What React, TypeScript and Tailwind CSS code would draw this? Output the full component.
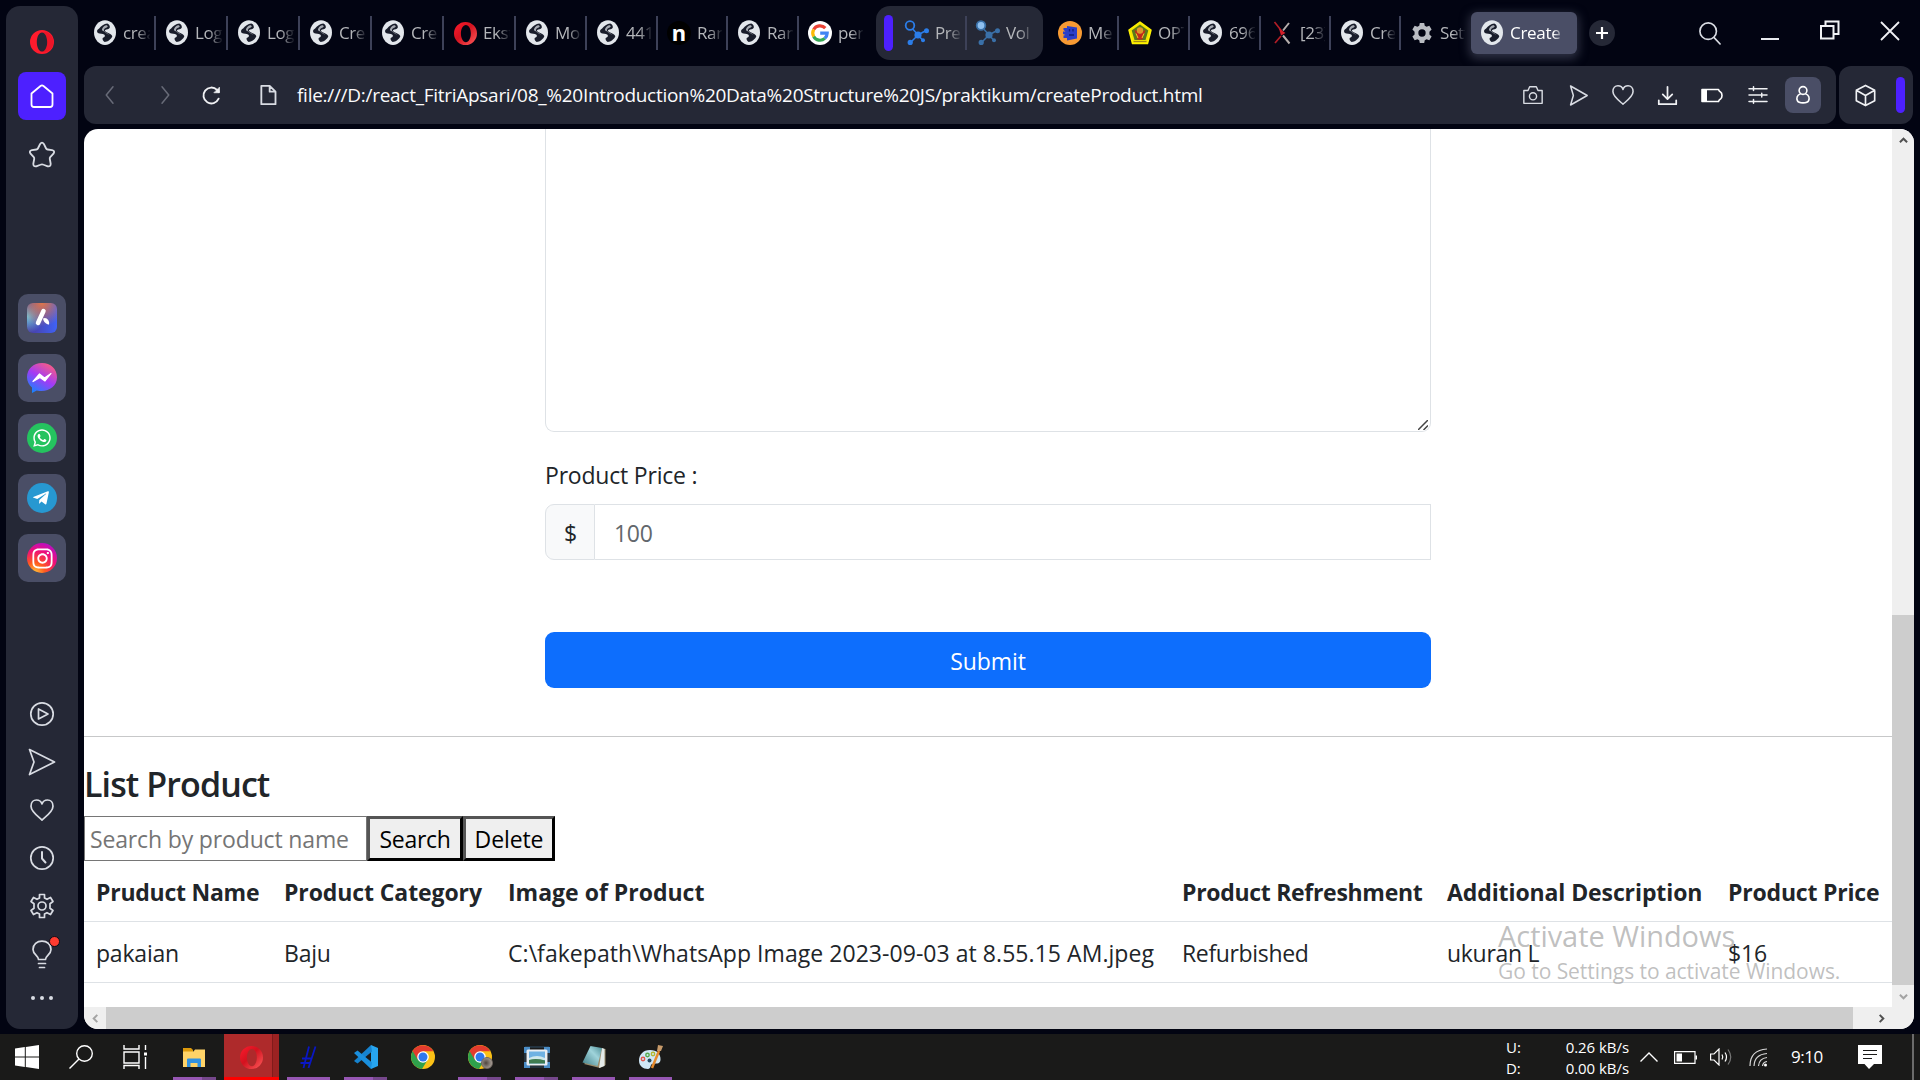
import React from "react";
import type { ReactNode } from "react";
import { FaWhatsapp, FaTelegramPlane, FaInstagram } from "react-icons/fa";

type IconProps = { className?: string };

/* ---------- favicons ---------- */

const Globe = ({ className = "size-[22px]" }: IconProps) => (
  <svg viewBox="0 0 24 24" className={`${className} overflow-visible`}>
    <ellipse cx="12" cy="12" rx="12" ry="14" fill="#e3e7ec" transform="translate(0 0) scale(1 .96)" />
    <path d="M14.500 1.500C11 2 7.500 4 5.600 7.200C3.200 8.400 2.600 10.500 4.200 12C6.500 13.200 9.500 12.400 11.400 14C12.600 15.400 11.600 16.800 9.800 17.200C8.600 18 9.600 20.800 11.600 21.800C15 21.600 18.600 19 20 15.600C19.400 13.400 16.600 12.600 14.400 11.400C12.600 10.600 11.400 9.600 12.200 8.600C13.600 7.600 16.200 8 17.200 6.200C17.600 4.400 16.600 2 14.500 1.500Z" fill="#191d2b" />
    <path d="M13 3.500C10.500 4.500 8.600 6.600 8.600 9C10.600 9.800 13 12.400 17 14.200C15.800 12.400 10.600 10.800 10.800 8.600C11 7 14 6.500 15 5C15 4 14 3.300 13 3.500Z" fill="#e3e7ec" opacity=".7" />
  </svg>
);

const OperaLogo = ({ className = "size-6" }: IconProps) => (
  <svg viewBox="0 0 24 24" className={className}>
    <path fillRule="evenodd" d="M12 0a12 12 0 1 0 0 24a12 12 0 1 0 0-24Zm0 2.400c3 0 5.200 4.400 5.200 9.600s-2.200 9.600-5.200 9.600s-5.200-4.400-5.200-9.600S9 2.400 12 2.400Z" fill="#ff1b2d" />
    <path d="M12 2.400c2-.9 4.600-.8 6.800.8c3 2.200 4.600 5.300 4.600 8.800s-1.600 6.600-4.600 8.800c-2.200 1.600-4.800 1.700-6.800.8c3 0 5.200-4.400 5.200-9.600S15 2.400 12 2.400Z" fill="#a70014" opacity=".2" />
  </svg>
);

const OperaRing = ({ className = "size-[23px]" }: IconProps) => (
  <svg viewBox="0 0 24 24" className={className}>
    <defs>
      <linearGradient id="ring" x1="0" y1="0" x2="1" y2="1">
        <stop offset="0" stopColor="#ff1b2d" />
        <stop offset=".45" stopColor="#d3121f" />
        <stop offset="1" stopColor="#ff5c5c" />
      </linearGradient>
    </defs>
    <path fillRule="evenodd" d="M12 0a12 12 0 1 0 0 24a12 12 0 1 0 0-24Zm.4 3c3 0 5.200 4 5.200 9s-2.200 9-5.200 9s-5.200-4-5.200-9S9.400 3 12.400 3Z" fill="url(#ring)" />
  </svg>
);

const NMark = () => (
  <span className="flex size-6 items-center justify-center rounded-full bg-black pb-[3px] font-['Noto_Sans'] text-[22px] leading-none font-bold text-white">n</span>
);

const GoogleMark = () => (
  <svg viewBox="0 0 24 24" className="size-6">
    <circle cx="12" cy="12" r="12" fill="#fff" />
    <g fill="none" strokeWidth="3.200">
      <path d="M17.300 7.200A7.200 7.200 0 0 0 5.700 8.500" stroke="#ea4335" />
      <path d="M5.700 8.500A7.200 7.200 0 0 0 5.700 15.500" stroke="#fbbc05" />
      <path d="M5.700 15.500A7.200 7.200 0 0 0 16.800 17.400" stroke="#34a853" />
      <path d="M16.800 17.400A7.200 7.200 0 0 0 19.200 12.200H12.200" stroke="#4285f4" />
    </g>
  </svg>
);

const NodesMark = ({ dim }: { dim?: boolean }) => {
  const c = dim ? "#3a70a8" : "#2b7de9";
  return (
    <svg viewBox="0 0 26 26" className="size-[26px]">
      <path d="M7 7 L14 15 L22 10.500 M14 15 L6 23 M14 15 L19 20.500" stroke={c} strokeWidth="1.500" fill="none" />
      <circle cx="6" cy="5.500" r="4.300" fill={dim ? "#8fc0f0" : "#252836"} stroke={c} strokeWidth="1.800" />
      <circle cx="14" cy="15" r="3.600" fill={c} />
      <circle cx="22.500" cy="10.800" r="2.500" fill={c} />
      <circle cx="6.200" cy="22.400" r="2.600" fill={c} />
      <circle cx="19" cy="20.300" r="2" fill={c} />
    </svg>
  );
};

const BookMark = () => (
  <svg viewBox="0 0 24 24" className="size-6">
    <circle cx="12" cy="12" r="12" fill="#f79a33" />
    <path d="M9 5L19 6.500V17.500L9 19.500V17L5.500 17V14.500L7.500 14L5 13V10.500H7.500L5.500 9V7H9Z" fill="#2b3fc9" />
    <path d="M11.500 8v2.500M15 8v2.500M11 14h5" stroke="#131f7a" strokeWidth="1.300" />
  </svg>
);

const CrestMark = () => (
  <svg viewBox="0 0 24 24" className="size-6">
    <path d="M12 1L23 9L19.500 22.500H4.500L1 9Z" fill="#f3e600" stroke="#fff200" strokeWidth="1.500" strokeLinejoin="round" />
    <path d="M12 3.500L20.300 9.500L17.500 19H6.500L3.700 9.500Z" fill="#5a7a1c" />
    <path d="M6.500 8.500L9.500 18.500H14.500L17.500 8.500L12 13Z" fill="#c3271c" />
    <circle cx="12" cy="9.500" r="3.200" fill="#e0952a" />
    <path d="M8 12.500L10 17M16 12.500L14 17" stroke="#e6d321" strokeWidth="1" />
    <path d="M5.500 20.500h13" stroke="#a38a16" strokeWidth="1.200" />
  </svg>
);

const XMark = () => (
  <svg viewBox="0 0 18 24" className="h-[24px] w-[18px]">
    <path d="M16 2L10 9.500M10 14.500L16.500 22.500" stroke="#b5aeac" strokeWidth="2" />
    <path d="M1.500 1L9 10.500M8 15L2 22" stroke="#b01d26" strokeWidth="1.700" />
    <path d="M6 7.500L12.500 12L8 14.500Z" fill="#d61f29" />
  </svg>
);

const GearSolid = () => (
  <svg viewBox="0 0 24 24" className="size-[22px]">
    <path fillRule="evenodd" fill="#b9bcc2" d="M9.600 1h4.800l.6 3.200 2 1.100L20 4.200l2.500 4.100-2.400 2.200v3l2.400 2.200L20 19.800l-3-1.100-2 1.100-.6 3.200H9.600L9 19.800l-2-1.100-3 1.100-2.500-4.100 2.400-2.200v-3L1.500 8.300 4 4.200l3 1.100 2-1.100ZM12 8a4 4 0 1 0 0 8a4 4 0 1 0 0-8Z" />
  </svg>
);

/* ---------- outline icons ---------- */

const Line = ({ size = 24, w = 1.7, color = "#d9dce3", children }: { size?: number; w?: number; color?: string; children: ReactNode }) => (
  <svg viewBox="0 0 24 24" width={size} height={size} fill="none" stroke={color} strokeWidth={w} strokeLinecap="round" strokeLinejoin="round" className="shrink-0 overflow-visible">
    {children}
  </svg>
);

const heart = <path d="M12 22C8 18.500 1 13.500 1 8.200C1 4.200 3.500 2 6.500 2C9 2 11.200 3.500 12 6C12.800 3.500 15 2 17.500 2C20.500 2 23 4.200 23 8.200C23 13.500 16 18.500 12 22Z" />;
const plane = <path d="M0 0L25 12.500L0 25L4.500 12.500Z" />;

/* ---------- tabs ---------- */

type TabItem = { icon: ReactNode; label: string; width: string; sep?: boolean };

const globe = <Globe />;

const tabsA: TabItem[] = [
  { icon: globe, label: "createProduct", width: "w-[72px]", sep: true },
  { icon: globe, label: "Login", width: "w-[72px]", sep: true },
  { icon: globe, label: "Login", width: "w-[72px]", sep: true },
  { icon: globe, label: "Create", width: "w-[72px]", sep: true },
  { icon: globe, label: "Create", width: "w-[72px]", sep: true },
  { icon: <OperaRing />, label: "Ekstensi", width: "w-[72px]", sep: true },
  { icon: globe, label: "Modul", width: "w-[71px]", sep: true },
  { icon: globe, label: "441", width: "w-[71px]", sep: true },
  { icon: <NMark />, label: "Rangkum", width: "w-[70px]", sep: true },
  { icon: globe, label: "Rangkum", width: "w-[71px]", sep: true },
  { icon: <GoogleMark />, label: "pengertian", width: "w-[70px]" },
];
const tabsB: TabItem[] = [
  { icon: <NodesMark />, label: "Presensi", width: "w-[71px]", sep: true },
  { icon: <NodesMark dim />, label: "Vol 1", width: "w-[71px]" },
];
const tabsC: TabItem[] = [
  { icon: <BookMark />, label: "Media", width: "w-[70px]", sep: true },
  { icon: <CrestMark />, label: "OPT", width: "w-[71px]", sep: true },
  { icon: globe, label: "696", width: "w-[71px]", sep: true },
  { icon: <XMark />, label: "[23]", width: "w-[70px]", sep: true },
  { icon: globe, label: "Create", width: "w-[70px]", sep: true },
  { icon: <GearSolid />, label: "Settings", width: "w-[70px]" },
];

const Tab = ({ icon, label, width, sep }: TabItem) => (
  <div className={`flex h-[34px] shrink-0 items-center ${width} ${sep ? "border-r-2 border-[#3d4158]" : "border-r-2 border-transparent"}`}>
    <span className="flex w-[42px] shrink-0 items-center justify-center">{icon}</span>
    <span className="-ml-[3px] mr-[4px] min-w-0 flex-1 overflow-hidden [mask-image:linear-gradient(to_right,black_50%,transparent_105%)] text-[17px] tracking-[-0.4px] whitespace-nowrap text-[#b4b6ba]">{label}</span>
  </div>
);

const TabStrip = () => (
  <header className="flex h-[66px] items-center pl-[6px]">
    {tabsA.map((t, i) => <Tab key={i} {...t} />)}
    <div className="ml-[7px] flex h-[54px] items-center rounded-[14px] bg-[#252836] pl-2">
      <span className="mr-[3px] h-9 w-[9px] rounded-full bg-[#4d20ff]" />
      {tabsB.map((t, i) => <Tab key={i} {...t} />)}
      <span className="w-[5px]" />
    </div>
    <span className="w-[6px] shrink-0" />
    {tabsC.map((t, i) => <Tab key={i} {...t} />)}
    <div className="flex h-[42px] w-[106px] shrink-0 items-center rounded-[6px] bg-[#4a4e66] pl-[10px] shadow-[0_3px_10px_2px_#2d3042]">
      <Globe />
      <span className="ml-[7px] w-[54px] overflow-hidden [mask-image:linear-gradient(to_right,black_80%,transparent)] text-[17px] tracking-[-0.3px] whitespace-nowrap text-white">Create P</span>
    </div>
    <span className="ml-3 flex size-[26px] shrink-0 items-center justify-center rounded-full bg-[#252836]">
      <svg viewBox="0 0 12 12" className="size-3"><path d="M6 0V12M0 6H12" stroke="#fff" strokeWidth="2.200" /></svg>
    </span>
    <div className="ml-auto flex h-full items-center pr-5">
      <span className="mr-[40px]"><Line size={22} w={1.800}><circle cx="10" cy="10" r="9" /><path d="M16.500 17L23 24" /></Line></span>
      <span className="mt-3 mr-[41px] h-[2px] w-[18px] bg-[#e8eaee]" />
      <svg viewBox="0 0 20 20" className="mr-[40px] mb-[6px] size-[20px]" fill="none" stroke="#f0f1f4" strokeWidth="2">
        <path d="M1 6h12.500v12.500H1ZM5.500 6V1.500H18.500V14H13.500" />
      </svg>
      <svg viewBox="0 0 20 20" className="mb-[5px] size-[20px]" fill="none" stroke="#f0f1f4" strokeWidth="1.800"><path d="M1 1L19 19M19 1L1 19" /></svg>
    </div>
  </header>
);

/* ---------- address bar ---------- */

const Slot = ({ className, children }: { className: string; children: ReactNode }) => (
  <span className={`flex h-full shrink-0 items-center justify-center ${className}`}>{children}</span>
);

const AddressBar = () => (
  <div className="flex h-[58px] gap-[3px]">
    <div className="flex w-[1752px] items-center rounded-[12px] bg-[#252836]">
      <Slot className="w-[52px]"><Line size={18} w={2} color="#686b78"><path d="M16 1L7 12L16 23" /></Line></Slot>
      <Slot className="w-[57px]"><Line size={18} w={2} color="#686b78"><path d="M8 1L17 12L8 23" /></Line></Slot>
      <Slot className="w-[36px]">
        <Line size={19} w={2.400} color="#f0f1f4"><path d="M21 16A10 10 0 1 1 19 5L21 7.500" /><path d="M22 2V8.500H15.500Z" fill="#f0f1f4" strokeWidth="1" /></Line>
      </Slot>
      <Slot className="w-[78px]"><Line size={20} w={2.200}><path d="M4 1H14L21 8V23H4ZM14 1V8H21" /></Line></Slot>
      <span className="-ml-[10px] text-[19px] tracking-[-0.28px] whitespace-nowrap text-[#fbfbfc]">file:///D:/react_FitriApsari/08_%20Introduction%20Data%20Structure%20JS/praktikum/createProduct.html</span>
      <div className="ml-auto flex h-full items-center pr-[15px]">
        <Slot className="w-[46px]"><Line size={20} w={1.700}><path d="M1 6.500H6L8 2H16L18 6.500H23V22H1Z" /><circle cx="12" cy="13.500" r="4.300" /></Line></Slot>
        <Slot className="w-[45px]"><Line size={19} w={1.900}><path d="M2 0L23 12L2 24L5.500 12Z" /></Line></Slot>
        <Slot className="w-[44px]"><Line size={22} w={1.700}>{heart}</Line></Slot>
        <Slot className="w-[45px]"><Line size={19} w={2.200} color="#f0f1f4"><path d="M12 1V16M6 10.500L12 16.500L18 10.500M1 18V23H23V18" /></Line></Slot>
        <Slot className="w-[45px]">
          <svg viewBox="0 0 22 14" className="mr-[2px] h-[15px] w-[22px]"><path d="M1 1H17.500Q18 2.800 19.500 3.500C21.500 4.500 21.500 9.500 19.500 10.500Q18 11.200 17.500 13H1Z" fill="none" stroke="#fff" strokeWidth="1.600" strokeLinejoin="round" /><path d="M1 1H6V13H1Z" fill="#fff" /></svg>
        </Slot>
        <Slot className="w-[45px]"><Line size={18} w={2} color="#f0f1f4"><path d="M0 3.500H24M0 12H24M0 20.500H24M6 1V6M17 9.500V14.500M6 18V23" /></Line></Slot>
        <span className="ml-[5px] flex size-9 items-center justify-center rounded-[8px] bg-[#4a4e66]">
          <Line size={18} w={2.100} color="#fff"><circle cx="12" cy="6" r="5.200" /><path d="M8.500 10.500C4 12 3 16 4.500 19.500C6 23.500 18 23.500 19.500 19.500C21 16 20 12 15.500 10.500" /></Line>
        </span>
      </div>
    </div>
    <div className="flex w-[74px] items-center rounded-[12px] bg-[#252836] pl-4">
      <Line size={21} w={1.900} color="#f0f1f4"><path d="M12 0.500L22.500 6V18L12 23.500L1.500 18V6ZM1.500 6L12 12L22.500 6M12 12V23.500" /></Line>
      <span className="ml-5 h-9 w-[9px] rounded-full bg-[#4d20ff]" />
    </div>
  </div>
);

/* ---------- side bar ---------- */

const AppTile = ({ children }: { children: ReactNode }) => (
  <span className="flex size-12 shrink-0 items-center justify-center rounded-[10px] bg-[#4a4e66]">{children}</span>
);

const SideBar = () => (
  <aside className="mt-[6px] flex h-[1023px] w-[72px] flex-col items-center rounded-[14px] bg-[#252836]">
    <span className="mt-6"><OperaLogo /></span>
    <span className="mt-[18px] flex size-12 items-center justify-center rounded-[8px] bg-[#4d20ff]">
      <Line size={24} w={1.800} color="#fff"><path d="M1.500 9.500L10.500 2Q12 .8 13.500 2L22.500 9.500V20.500Q22.500 23 20 23H4Q1.500 23 1.500 20.500Z" /></Line>
    </span>
    <span className="mt-[22px] h-[26px]"><Line size={26} w={1.700}><path d="M10.300 1.800Q12 -.6 13.700 1.800L15.800 6Q16.200 6.800 17.200 6.900L21.300 7.500Q24.300 8.300 22.600 10.800L19.600 14Q19 14.800 19.200 15.700L20 20Q20.200 22.800 17.300 22.400L13.500 21Q12 20.400 10.500 21L6.700 22.400Q3.800 22.800 4 20L4.800 15.700Q5 14.800 4.400 14L1.400 10.800Q-.3 8.300 2.700 7.500L6.800 6.900Q7.800 6.800 8.200 6Z" /></Line></span>
    <div className="mt-[126px] flex flex-col gap-3">
      <AppTile>
        <span className="flex size-[30px] items-center justify-center rounded-[6px] bg-[radial-gradient(circle_at_50%_0%,#e0764a_0%,transparent_70%),radial-gradient(circle_at_0%_45%,#6fc8e0_0%,transparent_50%),linear-gradient(to_right,#4a3a9c,#3f62f5)]">
          <svg viewBox="0 0 30 30" className="size-[30px]"><path d="M16.500 8L11 20" stroke="#fff" strokeWidth="4.500" strokeLinecap="round" /><path d="M16 15.500C19 13.500 23 17 22 21.500C19.500 21.500 16.500 19 16 15.500Z" fill="#fff" /></svg>
        </span>
      </AppTile>
      <AppTile>
        <svg viewBox="0 0 30 30" className="size-[30px]">
          <defs><linearGradient id="msg" x1=".8" y1="0" x2=".2" y2="1"><stop offset="0" stopColor="#ff5f7c" /><stop offset=".5" stopColor="#a33af5" /><stop offset="1" stopColor="#1286ff" /></linearGradient></defs>
          <path d="M15 0C6.500 0 0 6 0 14.200C0 18.500 2 22 5 24.500V30L9.800 27.400C20 30 30 24 30 14.200C30 6 23.500 0 15 0Z" fill="url(#msg)" />
          <path d="M6 18.500L12.500 11L17.500 15L24 10.500L18 18L13 14.500Z" fill="#fff" stroke="#fff" strokeWidth="1.200" strokeLinejoin="round" />
        </svg>
      </AppTile>
      <AppTile><span className="flex size-[30px] items-center justify-center rounded-full bg-[#25c35f]"><FaWhatsapp className="size-[20px] text-white" /></span></AppTile>
      <AppTile><span className="flex size-[30px] items-center justify-center rounded-full bg-[#2798d1]"><FaTelegramPlane className="mr-[2px] size-[18px] text-white" /></span></AppTile>
      <AppTile><span className="flex size-[30px] items-center justify-center rounded-full bg-[radial-gradient(circle_at_25%_100%,#ffc63a_0%,#ff5a1f_28%,#ee0f78_60%,#9a0ff0_100%)]"><FaInstagram className="size-[23px] text-white" /></span></AppTile>
    </div>
    <div className="mt-auto flex flex-col items-center gap-6 pb-[29px]">
      <Line><circle cx="12" cy="12" r="11.200" /><path d="M8.500 7V17L18 12Z" /></Line>
      <Line><g transform="translate(-.5 -.5)">{plane}</g></Line>
      <Line>{heart}</Line>
      <Line><circle cx="12" cy="12" r="11.200" /><path d="M12 6V12.500L15.500 16.500" strokeWidth="2" /></Line>
      <Line>
        <path d="M9.500 .5H14.500V4L17 5.300L20.500 3.500L23 7.500L20 9.700V14.300L23 16.500L20.500 20.500L17 18.700L14.500 20V23.500H9.500V20L7 18.700L3.500 20.500L1 16.500L4 14.300V9.700L1 7.500L3.500 3.500L7 5.300L9.500 4Z" />
        <circle cx="12" cy="12" r="4" />
      </Line>
      <span className="relative h-6">
        <Line><path d="M8.500 17.500C8.500 13.500 3 12.500 3 7.500C3 2.500 7 -.8 12 -.8S21 2.500 21 7.500C21 12.500 15.500 13.500 15.500 17.500ZM8.500 21.500H15.500M9.500 25.500H14.500" /></Line>
        <span className="absolute -top-[6px] left-[19px] size-[11px] rounded-full border border-[#0b0d18] bg-[#ff3b30]" />
      </span>
      <span className="mt-[6px] flex h-1 gap-1">
        <i className="size-1 rounded-full bg-[#d9dce3]" /><i className="ml-px size-1 rounded-full bg-[#d9dce3]" /><i className="ml-px size-1 rounded-full bg-[#d9dce3]" />
      </span>
    </div>
  </aside>
);

/* ---------- web page ---------- */

const cols = [
  { head: "Pruduct Name", cell: "pakaian", width: "w-[188px]", headTracking: "tracking-[-0.25px]", cellTracking: "tracking-[-0.2px]" },
  { head: "Product Category", cell: "Baju", width: "w-[224px]", headTracking: "tracking-[-0.1px]", cellTracking: "tracking-[-0.2px]" },
  { head: "Image of Product", cell: "C:\\fakepath\\WhatsApp Image 2023-09-03 at 8.55.15 AM.jpeg", width: "w-[674px]", headTracking: "tracking-[0px]", cellTracking: "tracking-[0.05px]" },
  { head: "Product Refreshment", cell: "Refurbished", width: "w-[265px]", headTracking: "tracking-[-0.3px]", cellTracking: "tracking-[-0.35px]" },
  { head: "Additional Description", cell: "ukuran L", width: "w-[281px]", headTracking: "tracking-[-0.1px]", cellTracking: "tracking-[-0.3px]" },
  { head: "Product Price", cell: "$16", width: "w-[176px]", headTracking: "tracking-[-0.2px]", cellTracking: "tracking-[-0.2px]" },
];

const Arrow = ({ d, color }: { d: string; color: string }) => (
  <svg viewBox="0 0 10 10" className="size-[9px]" fill="none" stroke={color} strokeWidth="2.200"><path d={d} /></svg>
);

const WebPage = () => (
  <main className="mt-[5px] flex h-[900px] w-[1830px] flex-col overflow-hidden rounded-[14px] bg-white">
    <div className="flex h-[878px]">
      <section className="flex w-[1808px] flex-col text-[23px] tracking-[-0.1px] text-[#212529]">
        <div className="mx-auto flex w-[886px] flex-col">
          <div className="relative h-[303px] rounded-b-[9px] border border-t-0 border-[#dee2e6]">
            <svg viewBox="0 0 10 10" className="absolute right-[2px] bottom-[1px] size-[10px]" stroke="#444" strokeWidth="1.500"><path d="M0 10L10 0M5.500 10L10 5.500" /></svg>
          </div>
          <label className="mt-[25px] h-9 leading-9 tracking-[-0.2px]">Product Price :</label>
          <div className="mt-[11px] flex h-14">
            <span className="flex w-[50px] items-center justify-center rounded-l-[9px] border border-[#dee2e6] bg-[#f8f9fa] pt-[2px] pl-px">$</span>
            <span className="flex flex-1 items-center border border-l-0 border-[#dee2e6] pt-[2px] pl-[19px] tracking-[-0.3px] text-[#62676c]">100</span>
          </div>
          <button className="mt-[72px] h-14 rounded-[9px] bg-[#0d6efd] pt-[2px] text-white">Submit</button>
        </div>
        <hr className="mt-12 border-[#c7c8c9]" />
        <h3 className="mt-[24px] h-[47px] text-[34px] leading-[47px] font-semibold tracking-[-0.9px]">List Product</h3>
        <div className="mt-[8px] flex h-[45px]">
          <span className="flex w-[283px] items-center border border-[#767676] pt-[2px] pl-[5px] tracking-[-0.15px] text-[#757575]">Search by product name</span>
          <button className="w-[96px] border-[3px] border-t-[#555] border-r-black border-b-black border-l-[#555] bg-[#efefef] pt-[2px] tracking-[-0.3px] text-black">Search</button>
          <button className="w-[92px] border-[3px] border-t-[#555] border-r-black border-b-black border-l-[#555] bg-[#efefef] pt-[2px] text-black">Delete</button>
        </div>
        <div className="flex h-[61px] items-center border-b border-[#dee2e6] pt-[2px] font-bold">
          {cols.map((c) => <span key={c.head} className={`shrink-0 pl-3 whitespace-nowrap ${c.width} ${c.headTracking}`}>{c.head}</span>)}
        </div>
        <div className="flex h-[61px] items-center border-b border-[#dee2e6] pt-[2px]">
          {cols.map((c) => <span key={c.head} className={`shrink-0 pl-3 whitespace-nowrap ${c.width} ${c.cellTracking}`}>{c.cell}</span>)}
        </div>
      </section>
      <div className="flex w-[22px] flex-col items-center bg-[#efefef] pt-[7px]">
        <Arrow d="M1 7L5 3L9 7" color="#505050" />
        <span className="mt-auto mb-[7px] h-[370px] w-full bg-[#cdcdcd]" />
        <Arrow d="M1 3L5 7L9 3" color="#a3a3a3" />
        <span className="h-[6px] shrink-0" />
      </div>
    </div>
    <div className="flex h-[22px] items-center bg-[#efefef]">
      <span className="flex w-[22px] justify-center"><Arrow d="M7 1L3 5L7 9" color="#a3a3a3" /></span>
      <span className="h-full w-[1747px] bg-[#cdcdcd]" />
      <span className="ml-[24px]"><Arrow d="M3 1L7 5L3 9" color="#505050" /></span>
    </div>
  </main>
);

/* ---------- Windows task bar ---------- */

const Chrome = () => (
  <svg viewBox="0 0 24 24" className="size-6">
    <circle cx="12" cy="12" r="12" fill="#fbc116" />
    <path d="M12 12L1.600 6A12 12 0 0 0 11 23.900L16.800 14.500Z" fill="#2fa14c" />
    <path d="M12 12L6.800 14.800L1.600 6A12 12 0 0 1 22.400 6.300H12Z" fill="#e33b2e" />
    <circle cx="12" cy="12" r="5.800" fill="#fff" /><circle cx="12" cy="12" r="4.500" fill="#2f78ee" />
  </svg>
);

type Task = { icon: ReactNode; bar?: "full" | "split" };

const explorer: Task = {
  bar: "split",
  icon: <svg viewBox="0 0 24 24" className="mr-px size-6"><path d="M1 3H9L11 5V9H1Z" fill="#dd9a0c" /><path d="M1 6.500H11.500L13 4.500H23V22H1Z" fill="#ffd368" /><path d="M5 22V14.500Q5 13.500 6 13.500H18Q19 13.500 19 14.500V22H15.500V18H8.500V22Z" fill="#3392e0" /></svg>,
};

const tasks: Task[] = [
  { bar: "full", icon: <svg viewBox="0 0 24 24" className="size-6" stroke="#0a17c4" strokeWidth="1.800" fill="none"><path d="M12 1.500L6.500 23M18.500 1.500L11.500 23M5 13.500H14.500M3.500 18H13" /></svg> },
  { bar: "split", icon: <svg viewBox="0 0 24 24" className="size-6"><path d="M17 0L24 3V21L17 24Z" fill="#27a5f0" /><path d="M17 0L18 6.500L3.500 18.500L0 16L17 0Z" fill="#1683cf" /><path d="M0 8L3.500 5.500L18 17.500L17 24Z" fill="#1a8fdd" /></svg> },
  { icon: <Chrome /> },
  { bar: "split", icon: <span className="relative"><Chrome /><span className="absolute right-[-1px] bottom-0 size-3 rounded-full border border-[#6f6660] bg-[radial-gradient(circle_at_40%_50%,#4f453e,#c2b9b1)]" /></span> },
  { bar: "split", icon: <svg viewBox="0 0 26 24" className="h-6 w-[26px]"><path d="M1 2H25V22H1Z" fill="none" stroke="#2f4d66" strokeWidth="1" /><path d="M0 2H6V8H0ZM20 2H26V8H20ZM0 17H6V23H0ZM20 17H26V23H20Z" fill="#4a8dc6" /><rect x="2.500" y="4.500" width="21" height="16" rx="1.500" fill="#e9eef3" /><rect x="5" y="6.500" width="16" height="12" fill="#6fb2e3" /><path d="M5 13Q13 9 21 13V15H5Z" fill="#cfe8ec" /><path d="M5 15Q12 13 21 15.500V18.500H5Z" fill="#3f7b50" /></svg> },
  { bar: "full", icon: <svg viewBox="0 0 26 24" className="h-6 w-[26px]"><defs><linearGradient id="note" x1="0" y1="1" x2="1" y2="0"><stop offset="0" stopColor="#3f7d86" /><stop offset=".6" stopColor="#9fd3da" /><stop offset="1" stopColor="#4b8c94" /></linearGradient></defs><path d="M20 3L24.500 4V20L19 23L3 19Z" fill="#9a8b6b" /><path d="M21 3L23.500 4V21L18 23Z" fill="#e4ebea" /><path d="M9.500 1L21 3L16.500 21L1.500 17.500Z" fill="url(#note)" /></svg> },
  { bar: "full", icon: <svg viewBox="0 0 26 26" className="size-[26px]"><path d="M12 6C5 6 1 11 1 16.500C1 22 5 25 10 25C13 25 12 21 14 20C17 19 22 21 22.500 16C23 10 19 6 12 6Z" fill="#cfe6f5" /><circle cx="5" cy="15" r="1.700" fill="none" stroke="#e2574c" strokeWidth="1.400" /><circle cx="9.500" cy="11" r="1.700" fill="none" stroke="#57a94c" strokeWidth="1.400" /><circle cx="15" cy="10" r="1.700" fill="none" stroke="#b5b82f" strokeWidth="1.400" /><circle cx="11.500" cy="16.500" r="2" fill="#23485f" /><path d="M14 24L21 7" stroke="#e58a2d" strokeWidth="2.500" /><path d="M19 7L20 1L25 2L23 7Z" fill="#c79a6a" /></svg> },
];

const TaskSlot = ({ icon, bar }: Task) => (
  <div className="flex h-full w-[57px] flex-col items-center">
    <span className="flex h-[43px] items-center pt-[3px]">{icon}</span>
    {bar && (
      <span className="flex h-[3px] w-[43px] bg-[#9656b3]">
        {bar === "split" && <i className="ml-auto w-[14px] bg-[#75478b]" />}
      </span>
    )}
  </div>
);

const TaskBar = () => (
  <footer className="flex h-[46px] shrink-0 items-center overflow-hidden bg-[#1a1a19] text-white">
    <span className="flex w-[54px] justify-center">
      <svg viewBox="0 0 24 24" className="size-6" fill="#fff"><path d="M0 3.400L9.800 2V11.500H0ZM10.800 1.900L24 0V11.500H10.800ZM0 12.500H9.800V22L0 20.600ZM10.800 12.500H24V24L10.800 22.100Z" /></svg>
    </span>
    <span className="flex w-[54px] justify-center">
      <svg viewBox="0 0 24 24" className="size-6" fill="none" stroke="#fff" strokeWidth="1.400"><circle cx="15.500" cy="8.500" r="7.800" /><path d="M10 14L.5 23.500" /></svg>
    </span>
    <span className="flex w-[58px] justify-center">
      <svg viewBox="0 0 24 24" className="mr-[4px] size-6" fill="none" stroke="#fff" strokeWidth="1.400"><path d="M1 0V4H16V0M1 7H16V18H1ZM1 24V20.500H16V24M22.500 0V5M22.500 12V24" /><path d="M21 7.500h3v3h-3z" fill="#fff" stroke="none" /></svg>
    </span>
    <TaskSlot {...explorer} />
    <div className="mx-[1px] flex h-full w-[55px] border-b-[3px] border-[#fe0000] bg-[#ae2a2b]">
      <span className="flex flex-1 items-center justify-center pt-[3px] pl-[6px]"><OperaRing /></span>
      <i className="w-[7px] border-l border-[#801b1b] bg-[#9b2222]" />
    </div>
    {tasks.map((t, i) => <TaskSlot key={i} {...t} />)}
    <div className="ml-auto flex h-full items-center">
      <div className="flex w-[123px] flex-col pt-px text-[15px] leading-[21px] tracking-[-0.05px]">
        <span className="flex justify-between"><span>U:</span><span>0.26 kB/s</span></span>
        <span className="flex justify-between"><span>D:</span><span>0.00 kB/s</span></span>
      </div>
      <svg viewBox="0 0 18 10" className="ml-[11px] h-[10px] w-[18px]" fill="none" stroke="#fff" strokeWidth="1.400"><path d="M.5 9.500L9 1L17.500 9.500" /></svg>
      <svg viewBox="0 0 23 13" className="ml-[16px] h-[13px] w-[23px]" fill="none" stroke="#fff" strokeWidth="1.200"><path d="M.6 .6H21V12.400H.6Z" /><path d="M2.500 2.500H8V10.500H2.500ZM21.500 4.500H23V8.500H21.500Z" fill="#fff" stroke="none" /></svg>
      <svg viewBox="0 0 22 18" className="ml-[13px] h-[18px] w-[22px]" fill="none" stroke="#fff" strokeWidth="1.200"><path d="M.6 6H4L9 1V17L4 12H.6Z" /><path d="M12 6.500Q13.500 9 12 11.500M15 4.500Q18 9 15 13.500" /><path d="M18 1.500Q23.500 9 18 16.500" stroke="#777" /></svg>
      <svg viewBox="0 0 19 19" className="ml-[17px] h-[19px] w-[19px]" fill="none" stroke="#fff" strokeWidth="1.200"><path d="M1 18Q1 2 18 1M5 18Q5.500 6.500 18 5.500M9.500 18Q10 10.500 18 9.500M13.500 18Q14 14 18 13.500" stroke="#d8d8d8" /><circle cx="16.500" cy="17" r="1.500" fill="#fff" stroke="none" /></svg>
      <span className="ml-[23px] w-[35px] text-[17px] tracking-[-0.5px] whitespace-nowrap">9:10</span>
      <svg viewBox="0 0 24 24" className="ml-[32px] size-6"><path d="M0 0H24V19H16L11 24L6.500 19H0Z" fill="#fff" /><path d="M5 5.500H19M5 9.500H19M5 13.500H14" stroke="#1a1a19" strokeWidth="1.200" /></svg>
      <i className="mr-[6px] ml-[30px] h-full w-[2px] bg-[#6b6b6b]" />
    </div>
  </footer>
);

export default function App() {
  return (
    <div className="relative flex h-[1080px] w-[1920px] flex-col overflow-hidden bg-[#020412] font-['Open_Sans',sans-serif]">
      <div className="flex h-[1034px] gap-[6px] pl-[6px]">
        <SideBar />
        <div className="-ml-[6px] w-[1842px]">
          <TabStrip />
          <div className="pl-[6px]">
            <AddressBar />
            <WebPage />
          </div>
        </div>
      </div>
      <TaskBar />
      <div className="pointer-events-none absolute top-[917px] left-[1498px] text-[#8a8a8a]/55">
        <p className="text-[29px] leading-[38px] tracking-[-0.05px]">Activate Windows</p>
        <p className="pt-px text-[21px] leading-[30px] tracking-[-0.05px]">Go to Settings to activate Windows.</p>
      </div>
    </div>
  );
}
